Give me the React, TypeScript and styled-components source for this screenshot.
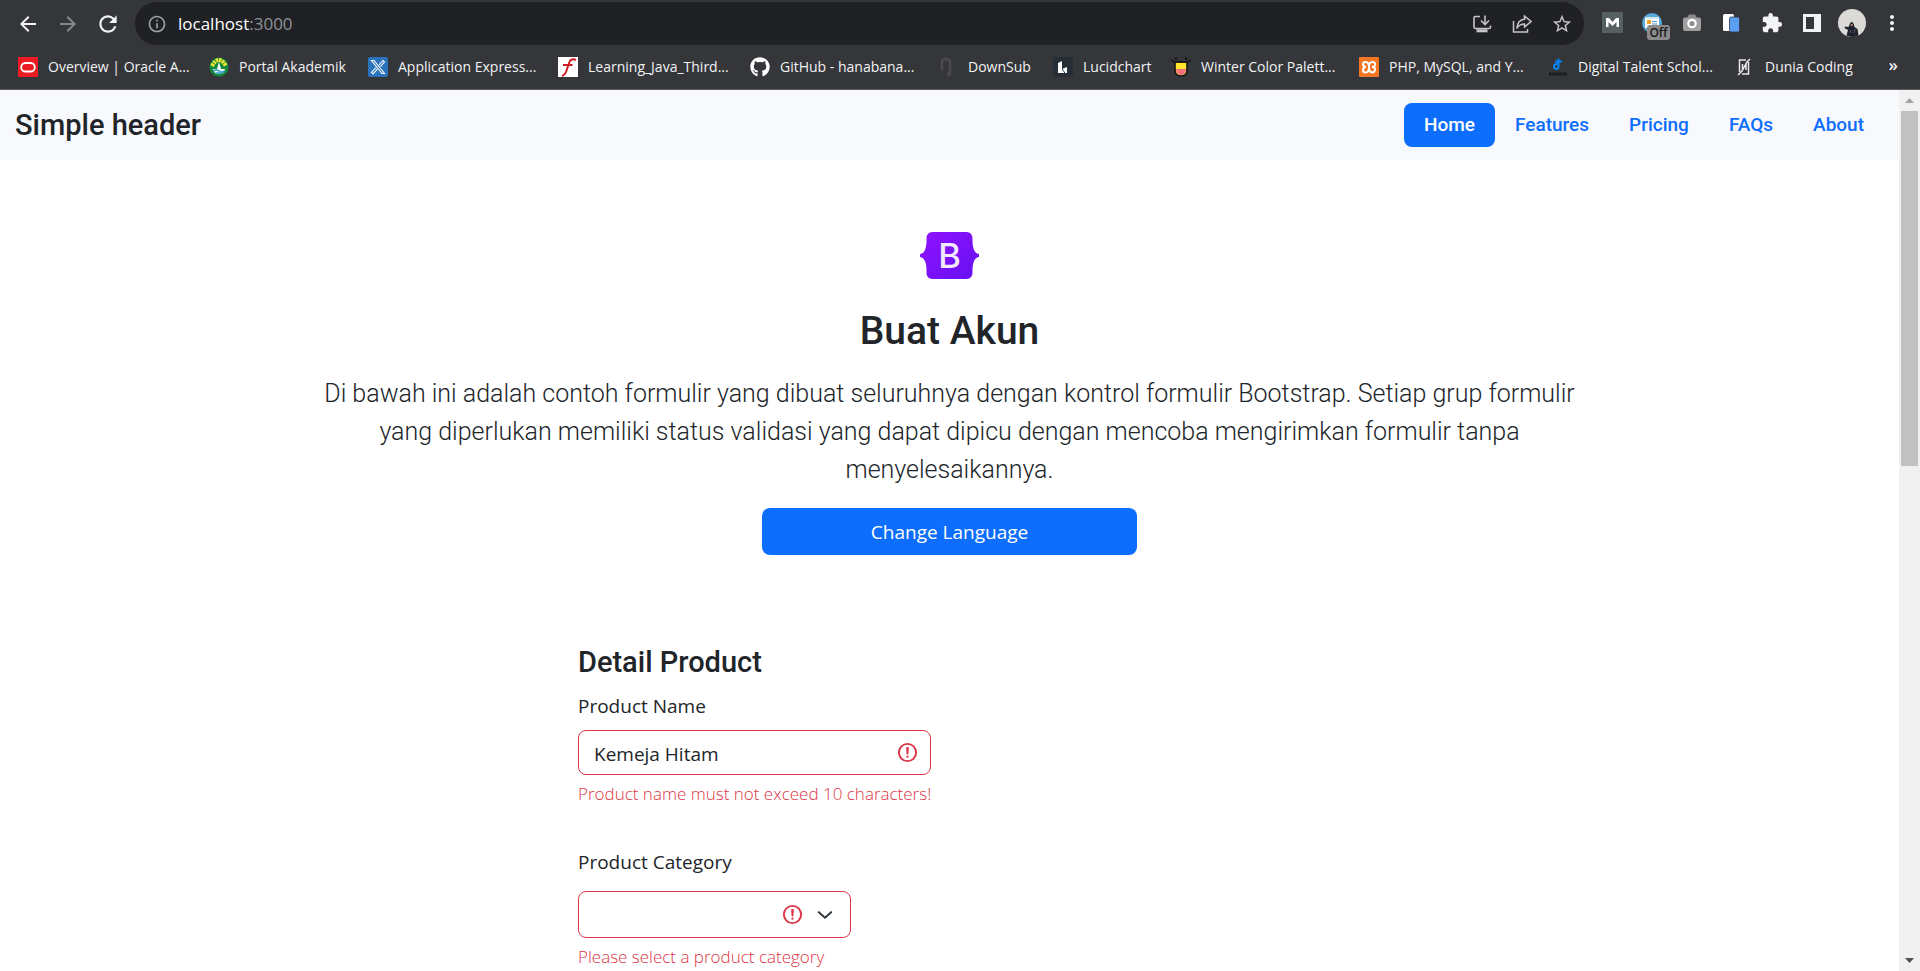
import React from "react";
import styled, { createGlobalStyle } from "styled-components";
import {
  MdArrowBack,
  MdArrowForward,
  MdRefresh,
  MdInfoOutline,
  MdStarBorder,
  MdExtension,
  MdMoreVert,
} from "react-icons/md";
import { FaGithub } from "react-icons/fa";

const ui = `"Segoe UI", "Open Sans", "Noto Sans", sans-serif`;
const brand = `Roboto, "Liberation Sans", sans-serif`;

const GlobalStyle = createGlobalStyle`
  *, *::before, *::after { box-sizing: border-box; }
  body { margin: 0; background: #fff; color: #212529; font-family: ${ui}; overflow: hidden; }
  h1, h2, h3, p, ul { margin: 0; padding: 0; }
  button, input, select { font: inherit; }
  svg { display: block; flex: none; }
`;

const Window = styled.div`
  display: flex;
  flex-direction: column;
  height: 100vh;
`;

/* ---------- browser frame ---------- */

const Frame = styled.header`
  flex: none;
  background: #35363a;
  border-bottom: 1px solid #5d5a62;
`;

const Toolbar = styled.div`
  display: flex;
  align-items: center;
  height: 45px;
  padding: 2px 16px 0 16px;
`;

const NavButtons = styled.div`
  display: flex;
  gap: 16px;
  margin-right: 15px;
`;

const ToolButton = styled.button<{ $dim?: boolean }>`
  display: flex;
  align-items: center;
  justify-content: center;
  width: 24px;
  height: 28px;
  padding: 0;
  border: 0;
  background: none;
  color: ${(p) => (p.$dim ? "#87888b" : "#f1f3f4")};
`;

const AddressBar = styled.div`
  display: flex;
  flex: 1;
  align-items: center;
  height: 43px;
  padding: 0 10px 0 12px;
  border-radius: 22px;
  background: #202124;
  color: #9aa0a6;
`;

const Address = styled.div`
  flex: 1;
  margin-left: 11px;
  color: #8d9196;
  font-size: 17px;
  line-height: 24px;
`;

const Host = styled.span`
  color: #fff;
`;

const AddressTools = styled.div`
  display: flex;
  gap: 16px;

  > button {
    color: #c4c5c7;
  }
`;

const Extensions = styled.div`
  display: flex;
  align-items: center;
  gap: 16px;
  margin-left: 16px;
  padding-bottom: 2px;
`;

const BadgeHolder = styled.span`
  position: relative;
  display: flex;
`;

const Badge = styled.span`
  position: absolute;
  top: 12px;
  left: 5px;
  width: 23px;
  border-radius: 3px;
  background: #8a8a8a;
  color: #17181a;
  font-size: 12px;
  font-weight: 600;
  line-height: 15px;
  text-align: center;
`;

const Bookmarks = styled.nav`
  display: flex;
  align-items: center;
  height: 44px;
  padding: 0 22px 0 18px;
`;

const Bookmark = styled.a<{ $width: number }>`
  display: flex;
  align-items: center;
  flex: none;
  gap: 10px;
  width: ${(p) => p.$width}px;
  color: #f1f3f4;
  font-size: 14px;
  line-height: 20px;
  text-decoration: none;
  white-space: nowrap;
`;

const Overflow = styled.button`
  margin-left: auto;
  padding: 0 0 4px;
  border: 0;
  background: none;
  color: #f1f3f4;
  font-size: 17px;
  font-weight: 600;
  line-height: 20px;
`;

/* ---------- page ---------- */

const Viewport = styled.div`
  display: flex;
  flex: 1;
  min-height: 0;
`;

const Page = styled.div`
  flex: 1;
  min-width: 0;
  overflow: hidden;
`;

const SiteHeader = styled.div`
  display: flex;
  align-items: center;
  justify-content: space-between;
  height: 70px;
  padding: 0 15px;
  background: #f8f9fc;
  font-family: ${brand};
  font-weight: 500;
`;

const SiteName = styled.a`
  color: #212529;
  font-size: 29px;
  line-height: 36px;
  text-decoration: none;
`;

const Nav = styled.nav`
  display: flex;
`;

const NavLink = styled.a<{ $active?: boolean }>`
  padding: 10px 20px;
  border-radius: 8px;
  background: ${(p) => (p.$active ? "#0d6efd" : "transparent")};
  color: ${(p) => (p.$active ? "#fff" : "#0d6efd")};
  font-size: 19px;
  line-height: 24px;
  text-decoration: none;
`;

const Hero = styled.section`
  display: flex;
  flex-direction: column;
  align-items: center;
  max-width: 1290px;
  margin: 0 auto;
  padding: 72px 10px 0;
  font-family: ${brand};
  text-align: center;
`;

const Title = styled.h1`
  margin: 28px 0 20px;
  font-size: 39px;
  font-weight: 500;
  line-height: 48px;
`;

const Lead = styled.p`
  font-size: 25px;
  font-weight: 300;
  line-height: 38px;
`;

const PrimaryButton = styled.button`
  width: 375px;
  max-width: 100%;
  height: 47px;
  margin-top: 19px;
  border: 0;
  border-radius: 8px;
  background: #0d6efd;
  color: #fff;
  font-family: ${ui};
  font-size: 19px;
  line-height: 30px;
`;

const Form = styled.form`
  width: 743px;
  max-width: 100%;
  margin: 89px auto 0;
`;

const FormTitle = styled.h2`
  margin-bottom: 11px;
  font-family: ${brand};
  font-size: 29px;
  font-weight: 500;
  line-height: 36px;
`;

const Field = styled.div<{ $gap: number; $width: number }>`
  display: flex;
  flex-direction: column;
  width: ${(p) => p.$width}px;
  margin-bottom: 40px;

  > label {
    margin-bottom: ${(p) => p.$gap}px;
    font-size: 19px;
    line-height: 30px;
  }
`;

const Control = styled.div`
  position: relative;

  > input,
  > select {
    display: block;
    width: 100%;
    padding: 2px 60px 0 15px;
    border: 1px solid #dc3545;
    border-radius: 8px;
    outline: 0;
    background: #fff;
    color: #212529;
    font-size: 19px;
    line-height: 30px;
    appearance: none;
  }
  > input {
    height: 45px;
  }
  > select {
    height: 47px;
  }
`;

const Marks = styled.span<{ $right: number }>`
  position: absolute;
  inset: 0 ${(p) => p.$right}px 0 auto;
  display: flex;
  align-items: center;
  gap: 12px;
  pointer-events: none;
`;

const ErrorText = styled.p`
  margin-top: 5px;
  color: #dc3545;
  font-size: 17px;
  font-weight: 300;
  line-height: 28px;
  height: 27px;
  white-space: nowrap;
`;

/* ---------- scroll bar ---------- */

const ScrollTrack = styled.div`
  display: flex;
  flex: none;
  flex-direction: column;
  width: 21px;
  padding: 0 2px;
  background: #f1f1f1;
`;

const ScrollArrow = styled.button<{ $end?: boolean }>`
  display: flex;
  align-items: center;
  justify-content: center;
  height: 21px;
  margin-top: ${(p) => (p.$end ? "auto" : "0")};
  padding: 0;
  border: 0;
  background: none;
  color: ${(p) => (p.$end ? "#505050" : "#a3a3a3")};
`;

const ScrollThumb = styled.div`
  flex: none;
  height: calc(40% + 3px);
  background: #c1c1c1;
`;

/* ---------- drawings ---------- */

const InstallIcon = () => (
  <svg width="20" height="20" viewBox="0 0 20 20" fill="none" stroke="currentColor" strokeWidth="1.600">
    <path d="M8 2.500H3.500Q2 2.500 2 4V13Q2 14.500 3.500 14.500H17Q18.500 14.500 18.500 13V11.500" />
    <path d="M13 1.500V10M9 6.500L13 10.500L17 6.500" />
    <path d="M4.500 16.800H15.500" strokeWidth="3" />
  </svg>
);

const ShareIcon = () => (
  <svg width="20" height="20" viewBox="0 0 20 20" fill="none" stroke="currentColor" strokeWidth="1.500">
    <path d="M1.500 7V18H15.500V15" />
    <path d="M12.500 2L19 7.500L12.500 13V10C8.500 10 6.500 11.500 4.800 14.500C5.300 9 8 5.500 12.500 5.200Z" />
  </svg>
);

const GmailCheckerIcon = () => (
  <svg width="21" height="21" viewBox="0 0 21 21">
    <rect width="21" height="21" fill="#566063" />
    <path d="M4 15V6H7L10.500 10L14 6H17V15H14.500V10L10.500 14L6.500 10V15Z" fill="#fff" />
  </svg>
);

const ReaderIcon = () => (
  <svg width="20" height="20" viewBox="0 0 20 20">
    <circle cx="10" cy="10" r="10" fill="#5aa9dc" />
    <rect x="3" y="4" width="14" height="11" fill="#fff" />
    <rect x="3" y="4" width="14" height="2" fill="#d5e7f2" />
    <rect x="5" y="7" width="4" height="4" fill="#f2a22b" />
    <path d="M10 8.500H15M10 11H15" stroke="#4b91c4" />
  </svg>
);

const CameraIcon = () => (
  <svg width="20" height="20" viewBox="0 0 20 20">
    <rect x="1" y="4.500" width="18" height="13.500" rx="2" fill="#a0a0a0" />
    <path d="M5 5L7 1.500H13L15 5Z" fill="#8a8a8a" />
    <circle cx="10" cy="10.500" r="3.700" fill="#8f8f8f" stroke="#fff" strokeWidth="2.200" />
  </svg>
);

const PagesIcon = () => (
  <svg width="20" height="20" viewBox="0 0 20 20">
    <rect x="1" y="1" width="11" height="17" rx="1.500" fill="#fff" />
    <rect x="7.500" y="4" width="10" height="15" rx="1.500" fill="#5b9ff5" stroke="#35363a" strokeWidth=".8" />
  </svg>
);

const SidePanelIcon = () => (
  <svg width="20" height="20" viewBox="0 0 20 20">
    <path d="M1 1H19V19H1ZM4 4V16H12V4Z" fill="#f1f3f4" fillRule="evenodd" />
  </svg>
);

const Avatar = () => (
  <svg width="28" height="28" viewBox="0 0 28 28">
    <circle cx="14" cy="14" r="14" fill="#dcdad7" />
    <path
      d="M8.500 26.600L10 21L6.500 19L7 17.500L10.500 18L12 14.500Q13.800 11.500 15.800 15L16.500 18L19.500 20L20.500 26.400Q14 29.300 8.500 26.600Z"
      fill="#20212c"
    />
    <circle cx="13.800" cy="16" r="1.300" fill="#a57d6b" />
    <path d="M12 21L13 24M17 20L16 24" stroke="#55576a" />
  </svg>
);

const OracleIcon = () => (
  <svg width="20" height="20" viewBox="0 0 20 20">
    <rect width="20" height="20" fill="#ed1c24" />
    <rect x="3.200" y="6" width="13.600" height="8.500" rx="4.250" fill="none" stroke="#fff" strokeWidth="1.800" />
  </svg>
);

const PortalIcon = () => (
  <svg width="20" height="20" viewBox="0 0 20 20">
    <circle cx="10" cy="10" r="9.500" fill="#12893d" />
    <path d="M3 9Q10 -3 17 9" fill="none" stroke="#f1e534" strokeWidth="4" strokeDasharray="2.500 .7" />
    <path d="M4 12H16Q15 17 10 17Q5 17 4 12Z" fill="#e8f5ee" />
    <path d="M4.500 14Q7 12 10 14T15.500 14M7 16H13" fill="none" stroke="#2d9cc9" strokeWidth="1.400" />
    <path d="M10 5L12 12H8Z" fill="#fff" />
  </svg>
);

const ApexIcon = () => (
  <svg width="20" height="20" viewBox="0 0 20 20">
    <rect width="20" height="20" rx="2" fill="#2b73ba" />
    <g fill="none" stroke="#fff" strokeWidth="1.100">
      <path d="M3.500 3.500H6L16.500 16.500H14Z" />
      <path d="M11 8L15 3.500L16.500 5L12.300 9.600M8 10.500L3.500 15.500L5 17L9.300 12.200" />
    </g>
  </svg>
);

const FoxitIcon = () => (
  <svg width="20" height="20" viewBox="0 0 20 20">
    <rect width="20" height="20" fill="#fff" />
    <path d="M18 3Q13 1 11.500 5L8 15Q7 18 4 19M5 8H14.500" fill="none" stroke="#cf1b25" strokeWidth="2" />
  </svg>
);

const DownSubIcon = () => (
  <svg width="20" height="20" viewBox="0 0 20 20" fill="none" stroke="#4c4a4b" strokeWidth="2.500">
    <path d="M4 13V5Q4 2 8 2Q12 2 12 5V18M9 16L12 19" />
  </svg>
);

const LucidIcon = () => (
  <svg width="20" height="20" viewBox="0 0 20 20">
    <rect width="20" height="20" fill="#262d35" />
    <path d="M5 6L9 4V12L14 10V16H5Z" fill="#fff" />
    <path d="M9 12L12 16" stroke="#262d35" />
  </svg>
);

const PaletteIcon = () => (
  <svg width="20" height="20" viewBox="0 0 20 20">
    <path d="M4 5H16V13Q16 19 10 19Q4 19 4 13Z" fill="#ffe62c" stroke="#161616" strokeWidth="1.600" />
    <path d="M5 12H15V13Q14 18 10 18Q6 18 5 13Z" fill="#f6717e" />
    <path d="M0 3Q2 5 5 5H15Q18 5 20 3" fill="none" stroke="#161616" strokeWidth="1.600" />
    <circle cx="5" cy="1.500" r="1.200" fill="#161616" />
    <circle cx="15" cy="1.500" r="1.200" fill="#161616" />
  </svg>
);

const XamppIcon = () => (
  <svg width="20" height="20" viewBox="0 0 20 20">
    <rect width="20" height="20" rx="1" fill="#f37623" />
    <path
      d="M4 7Q4 5 6.500 5Q10 5 10 10Q10 5 13.500 5Q16.500 5 16 8Q15.500 10 13 10Q16.500 10 16 13Q15.500 15.500 13 15.500Q10 15 10 10Q10 15.500 6.500 15.500Q4 15.500 4 13Q4 10 7 10Q4 10 4 7Z"
      fill="none"
      stroke="#fff"
      strokeWidth="2"
    />
  </svg>
);

const DigitalentIcon = () => (
  <svg width="20" height="20" viewBox="0 0 20 20" fill="none">
    <path d="M10.500 1.500V9Q10.500 12 8.500 12Q6 12 6 9.500Q6 7 9 7H10.500M7 4.500H14" stroke="#0a84f5" strokeWidth="2" />
    <path d="M1 17H19" stroke="#18191c" strokeWidth="3" strokeDasharray="2 .5" />
  </svg>
);

const DuniaIcon = () => (
  <svg width="20" height="20" viewBox="0 0 20 20" fill="none" stroke="#e8e8e8" strokeWidth="1.500">
    <path d="M4.500 15V3H11M13.500 5V17H7M15 2L12 5L7 14L3 18M7.500 7V13M11 7V13" />
  </svg>
);

const BootstrapLogo = () => (
  <svg width="59" height="47" viewBox="0 0 118 94" role="img" aria-label="Bootstrap">
    <defs>
      <linearGradient id="shell" x1="0" y1="0" x2="1" y2="1">
        <stop offset="0" stopColor="#9013fe" />
        <stop offset="1" stopColor="#6610f2" />
      </linearGradient>
    </defs>
    <path
      fill="url(#shell)"
      d="M24.509 0c-6.733 0-11.715 5.893-11.492 12.284.214 6.140-.064 14.092-2.066 20.577C8.943 39.365 5.547 43.485 0 44.014v5.972c5.547.529 8.943 4.649 10.951 11.153 2.002 6.485 2.280 14.437 2.066 20.577C12.794 88.106 17.776 94 24.510 94H93.500c6.733 0 11.714-5.893 11.491-12.284-.214-6.140.064-14.092 2.066-20.577 2.009-6.504 5.396-10.624 10.943-11.153v-5.972c-5.547-.529-8.934-4.649-10.943-11.153-2.002-6.484-2.280-14.437-2.066-20.577C105.214 5.894 100.233 0 93.500 0H24.508z"
    />
    <text x="59" y="72" textAnchor="middle" fill="#f3e9ff" fontFamily="Inter, sans-serif" fontSize="69" fontWeight="500">
      B
    </text>
  </svg>
);

const AlertIcon = () => (
  <svg width="23" height="23" viewBox="0 0 12 12" fill="none" stroke="#dc3545">
    <circle cx="6" cy="6" r="4.500" />
    <path strokeLinejoin="round" d="M5.800 3.600h.4L6 6.500z" />
    <circle cx="6" cy="8.200" r=".6" fill="#dc3545" stroke="none" />
  </svg>
);

const Chevron = () => (
  <svg width="18" height="18" viewBox="0 0 16 16" fill="none" stroke="#343a40" strokeWidth="1.800">
    <path strokeLinecap="round" strokeLinejoin="round" d="M2.500 5.500l5.500 5 5.500-5" />
  </svg>
);

const Triangle = ({ down }: { down?: boolean }) => (
  <svg width="9" height="5" viewBox="0 0 9 5" fill="currentColor">
    <path d={down ? "M0 0H9L4.500 5Z" : "M0 5H9L4.500 0Z"} />
  </svg>
);

const bookmarks = [
  { label: "Overview | Oracle A...", width: 191, icon: <OracleIcon /> },
  { label: "Portal Akademik", width: 159, icon: <PortalIcon /> },
  { label: "Application Express...", width: 190, icon: <ApexIcon /> },
  { label: "Learning_Java_Third...", width: 192, icon: <FoxitIcon /> },
  { label: "GitHub - hanabana...", width: 188, icon: <FaGithub size={20} color="#fff" /> },
  { label: "DownSub", width: 115, icon: <DownSubIcon /> },
  { label: "Lucidchart", width: 118, icon: <LucidIcon /> },
  { label: "Winter Color Palett...", width: 188, icon: <PaletteIcon /> },
  { label: "PHP, MySQL, and Y...", width: 189, icon: <XamppIcon /> },
  { label: "Digital Talent Schol...", width: 187, icon: <DigitalentIcon /> },
  { label: "Dunia Coding", width: 120, icon: <DuniaIcon /> },
];

const links = ["Home", "Features", "Pricing", "FAQs", "About"];

export default function App() {
  return (
    <Window>
      <GlobalStyle />
      <Frame>
        <Toolbar>
          <NavButtons>
            <ToolButton aria-label="Back"><MdArrowBack size={24} /></ToolButton>
            <ToolButton aria-label="Forward" $dim><MdArrowForward size={24} /></ToolButton>
            <ToolButton aria-label="Reload"><MdRefresh size={26} /></ToolButton>
          </NavButtons>
          <AddressBar>
            <MdInfoOutline size={20} />
            <Address><Host>localhost</Host>:3000</Address>
            <AddressTools>
              <ToolButton aria-label="Install"><InstallIcon /></ToolButton>
              <ToolButton aria-label="Share"><ShareIcon /></ToolButton>
              <ToolButton aria-label="Bookmark this page"><MdStarBorder size={22} /></ToolButton>
            </AddressTools>
          </AddressBar>
          <Extensions>
            <ToolButton aria-label="Mail"><GmailCheckerIcon /></ToolButton>
            <ToolButton aria-label="Reader">
              <BadgeHolder><ReaderIcon /><Badge>Off</Badge></BadgeHolder>
            </ToolButton>
            <ToolButton aria-label="Screenshot"><CameraIcon /></ToolButton>
            <ToolButton aria-label="Pages"><PagesIcon /></ToolButton>
            <ToolButton aria-label="Extensions"><MdExtension size={22} /></ToolButton>
            <ToolButton aria-label="Side panel"><SidePanelIcon /></ToolButton>
            <ToolButton aria-label="Profile"><Avatar /></ToolButton>
            <ToolButton aria-label="Menu"><MdMoreVert size={24} /></ToolButton>
          </Extensions>
        </Toolbar>
        <Bookmarks aria-label="Bookmarks">
          {bookmarks.map((b) => (
            <Bookmark key={b.label} href="#" $width={b.width}>
              {b.icon}
              {b.label}
            </Bookmark>
          ))}
          <Overflow aria-label="More bookmarks">»</Overflow>
        </Bookmarks>
      </Frame>
      <Viewport>
        <Page>
          <SiteHeader>
            <SiteName href="#">Simple header</SiteName>
            <Nav>
              {links.map((l, i) => (
                <NavLink key={l} href="#" $active={i === 0}>{l}</NavLink>
              ))}
            </Nav>
          </SiteHeader>
          <Hero>
            <BootstrapLogo />
            <Title>Buat Akun</Title>
            <Lead>
              Di bawah ini adalah contoh formulir yang dibuat seluruhnya dengan kontrol formulir Bootstrap. Setiap grup
              formulir yang diperlukan memiliki status validasi yang dapat dipicu dengan mencoba mengirimkan formulir
              tanpa menyelesaikannya.
            </Lead>
            <PrimaryButton type="button">Change Language</PrimaryButton>
          </Hero>
          <Form>
            <FormTitle>Detail Product</FormTitle>
            <Field $gap={9} $width={353}>
              <label htmlFor="name">Product Name</label>
              <Control>
                <input id="name" type="text" defaultValue="Kemeja Hitam" aria-invalid="true" />
                <Marks $right={12}><AlertIcon /></Marks>
              </Control>
              <ErrorText>Product name must not exceed 10 characters!</ErrorText>
            </Field>
            <Field $gap={14} $width={273}>
              <label htmlFor="category">Product Category</label>
              <Control>
                <select id="category" defaultValue="" aria-invalid="true">
                  <option value="" aria-label="None" />
                </select>
                <Marks $right={17}><AlertIcon /><Chevron /></Marks>
              </Control>
              <ErrorText>Please select a product category</ErrorText>
            </Field>
          </Form>
        </Page>
        <ScrollTrack>
          <ScrollArrow aria-label="Scroll up"><Triangle /></ScrollArrow>
          <ScrollThumb />
          <ScrollArrow aria-label="Scroll down" $end><Triangle down /></ScrollArrow>
        </ScrollTrack>
      </Viewport>
    </Window>
  );
}
